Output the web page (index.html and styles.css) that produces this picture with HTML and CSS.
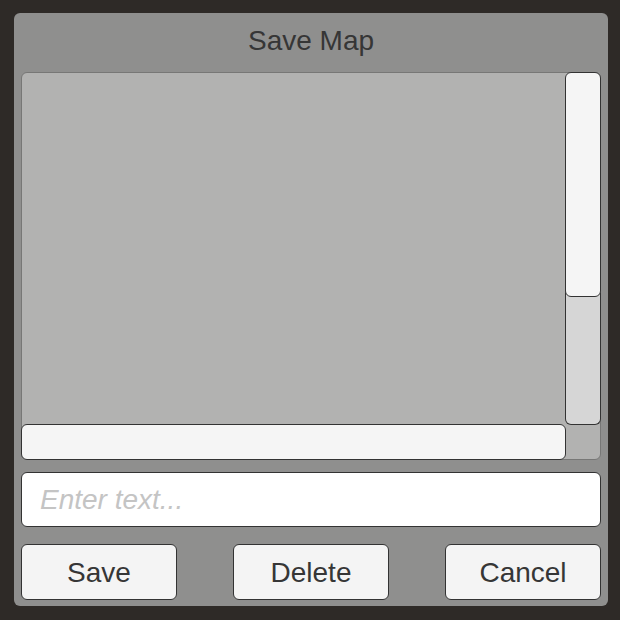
FILE: index.html
```html
<!DOCTYPE html>
<html>
<head>
<meta charset="utf-8">
<link rel="stylesheet" href="styles.css">
</head>
<body>
<div class="panel">
  <div class="title">Save Map</div>
  <div class="scroll">
    <div class="viewport"></div>
    <div class="vbar">
      <div class="vthumb"></div>
      <div class="vtrack"></div>
    </div>
    <div class="hbar"></div>
    <div class="corner"></div>
  </div>
  <div class="input"><span class="placeholder">Enter text...</span></div>
  <div class="buttons">
    <div class="btn">Save</div>
    <div class="btn">Delete</div>
    <div class="btn">Cancel</div>
  </div>
</div>
</body>
</html>
```
FILE: styles.css
```css
html, body {
  margin: 0;
  padding: 0;
  background: #2e2a27;
  width: 620px;
  height: 620px;
  overflow: hidden;
  font-family: "Liberation Sans", Arial, sans-serif;
}
.panel {
  position: relative;
  margin: 13px 0 0 14px;
  width: 594px;
  height: 593px;
  background: #8f8f8e;
  border-radius: 6px;
  box-sizing: border-box;
  padding: 0 7px 0 7px;
  display: flex;
  flex-direction: column;
}
.title {
  height: 59px;
  line-height: 56px;
  text-align: center;
  font-size: 28px;
  color: #363636;
}
.scroll {
  height: 388px;
  display: grid;
  grid-template-columns: 1fr 35px;
  grid-template-rows: 1fr 35px;
  background: #b2b2b1;
  border: 1px solid #777776;
  border-radius: 6px;
  box-sizing: border-box;
}
.viewport {
  grid-column: 1;
  grid-row: 1;
}
.vbar {
  grid-column: 2;
  grid-row: 1;
  display: flex;
  flex-direction: column;
  margin: -1px -1px 0 0;
  height: 353px;
}
.vthumb {
  height: 225px;
  background: #f5f5f5;
  border: 1px solid #333;
  border-radius: 6px;
  box-sizing: border-box;
  position: relative;
  z-index: 2;
}
.vtrack {
  flex: 1;
  margin-top: -6px;
  background: #d6d6d6;
  border: 1px solid #333;
  border-top: none;
  border-radius: 0 0 6px 6px;
  box-sizing: border-box;
}
.hbar {
  grid-column: 1;
  grid-row: 2;
  margin: 0 -1px -1px -1px;
  background: #f5f5f5;
  border: 1px solid #333;
  border-radius: 6px;
  box-sizing: border-box;
  position: relative;
  top: -1px;
  height: 36px;
}
.corner {
  grid-column: 2;
  grid-row: 2;
}
.input {
  margin-top: 12px;
  height: 55px;
  background: #ffffff;
  border: 1px solid #333;
  border-radius: 6px;
  box-sizing: border-box;
  display: flex;
  align-items: center;
  padding-left: 18px;
}
.placeholder {
  font-style: italic;
  font-size: 28px;
  color: #c4c4c4;
}
.buttons {
  margin-top: 17px;
  display: flex;
  justify-content: space-between;
}
.btn {
  width: 156px;
  height: 56px;
  background: #f4f4f4;
  border: 1px solid #333;
  border-radius: 6px;
  box-sizing: border-box;
  display: flex;
  align-items: center;
  justify-content: center;
  font-size: 28px;
  color: #363636;
  padding-top: 2px;
}
```
